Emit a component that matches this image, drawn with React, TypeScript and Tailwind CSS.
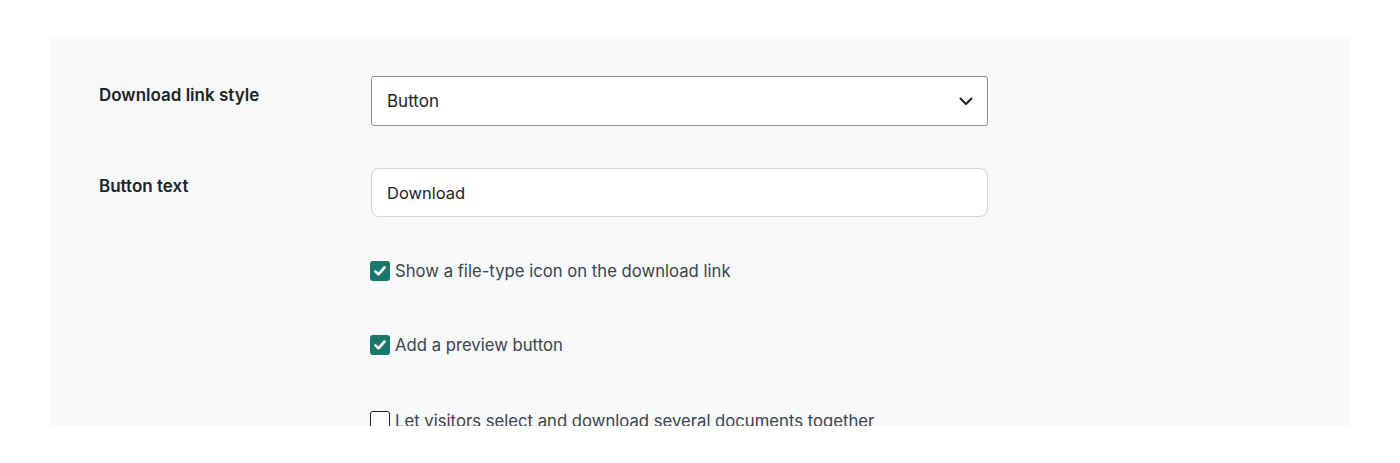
import React from "react";

function Check({ checked }: { checked: boolean }) {
  return checked ? (
    <span className="flex h-[20px] w-[20px] shrink-0 items-center justify-center rounded-[3px] bg-[#18786a]">
      <svg width="14" height="14" viewBox="0 0 14 14" fill="none">
        <path d="M2.4 7.4 L5.5 10.4 L11.6 3.4" stroke="white" strokeWidth="2.6" strokeLinecap="round" strokeLinejoin="round" />
      </svg>
    </span>
  ) : (
    <span className="block h-[20px] w-[20px] shrink-0 rounded-[3px] border-[1.5px] border-[#1e1e1e] bg-white" />
  );
}

function CheckRow({ checked, label, className }: { checked: boolean; label: string; className: string }) {
  return (
    <div className={"flex items-center gap-[5px] ml-[-1px] " + className}>
      <Check checked={checked} />
      <span className="text-[16.7px] leading-[24px] text-[#3c434a]">{label}</span>
    </div>
  );
}

export default function App() {
  return (
    <div className="h-[463px] bg-white px-[50px] pt-[37px]" style={{ fontFamily: "Inter, 'Noto Sans', sans-serif" }}>
      <div className="h-[389px] overflow-hidden bg-[#f8f9fb] pl-[49px] pt-[39px]">
        <div className="flex">
          <div className="w-[272px] pt-[7px] text-[17px] font-semibold leading-[24px] text-[#1d2327]">Download link style</div>
          <div className="flex h-[50px] w-[617px] items-center justify-between rounded-[3px] border border-[#8c8f94] bg-white pl-[15px] pr-[14px] pt-[2px]">
            <span className="text-[17px] text-[#1e1e1e]">Button</span>
            <svg width="14" height="14" viewBox="0 0 14 14" fill="none" className="-mt-[2px]">
              <path d="M1.5 4.5 L7 10 L12.5 4.5" stroke="#1e1e1e" strokeWidth="2" strokeLinecap="round" strokeLinejoin="round" />
            </svg>
          </div>
        </div>
        <div className="mt-[42px] flex">
          <div className="w-[272px] pt-[6px] text-[17px] font-semibold leading-[24px] text-[#1d2327]">Button text</div>
          <div className="flex h-[49px] w-[617px] items-center rounded-[8px] border border-[#d6d6da] bg-white pl-[15px] pt-[2px]">
            <span className="text-[16.5px] text-[#1e1e1e]">Download</span>
          </div>
        </div>
        <div className="pl-[272px]">
          <CheckRow checked label="Show a file-type icon on the download link" className="mt-[42px]" />
          <CheckRow checked label="Add a preview button" className="mt-[50px]" />
          <CheckRow checked={false} label="Let visitors select and download several documents together" className="mt-[52px]" />
        </div>
      </div>
    </div>
  );
}
